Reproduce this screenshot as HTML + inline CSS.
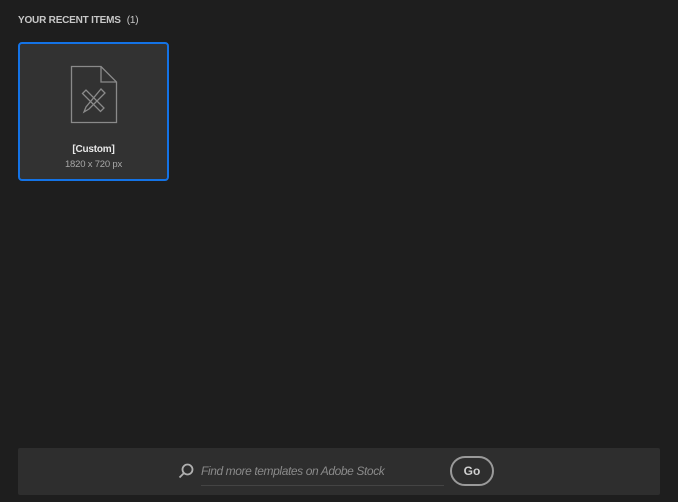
<!DOCTYPE html>
<html><head><style>
body{margin:0;width:678px;height:502px;background:#1e1e1e;font-family:"Liberation Sans",sans-serif;position:relative;overflow:hidden}
.h{position:absolute;left:18px;top:15px;font-size:10px;font-weight:bold;color:#c8c8c8;letter-spacing:-0.2px}
.h span{font-weight:normal;margin-left:6px}
.card{position:absolute;left:18px;top:42px;width:147px;height:135px;background:#323232;border:2px solid #1473e6;border-radius:4px}
.t1{position:absolute;left:0;right:0;top:100px;text-align:center;font-size:10px;font-weight:bold;color:#e8e8e8;letter-spacing:-0.2px}
.t2{position:absolute;left:0;right:0;top:115px;text-align:center;font-size:9.5px;color:#a8a8a8;letter-spacing:-0.2px}
.bar{position:absolute;left:18px;top:448px;width:642px;height:47px;background:#2e2e2e;border-radius:2px}
.ph{position:absolute;left:201px;top:464px;font-size:12px;font-style:italic;color:#8a8a8a;letter-spacing:-0.4px}
.ul{position:absolute;left:201px;top:485px;width:243px;height:1px;background:#444}
.go{position:absolute;left:450px;top:456px;width:40px;height:26px;border:2px solid #9a9a9a;border-radius:15px;color:#d0d0d0;font-size:12px;font-weight:bold;text-align:center;line-height:26px}
</style></head><body>
<div class="h">YOUR RECENT ITEMS<span>(1)</span></div>
<div class="card">
<svg style="position:absolute;left:50px;top:21px" width="48" height="60" viewBox="0 0 48 60">
<g fill="none" stroke="#8a8a8a" stroke-width="1.3">
<path d="M1.5 1.5H31L46.5 17V57.5H1.5Z"/><path d="M31 1.5V17H46.5"/>
<path d="M12.5 28.5L16 25L34 43L30.5 46.5Z"/>
<path d="M31 24L35 28L19 44L14 47L16 42Z"/>
</g></svg>
<div class="t1">[Custom]</div>
<div class="t2">1820 x 720 px</div>
</div>
<div class="bar"></div>
<svg style="position:absolute;left:178px;top:463px" width="16" height="16" viewBox="0 0 16 16"><g fill="none" stroke="#b0b0b0" stroke-width="1.8"><circle cx="9.5" cy="6.5" r="5"/><path d="M6 10L1.5 14.5"/></g></svg>
<div class="ph">Find more templates on Adobe Stock</div>
<div class="ul"></div>
<div class="go">Go</div>
</body></html>
